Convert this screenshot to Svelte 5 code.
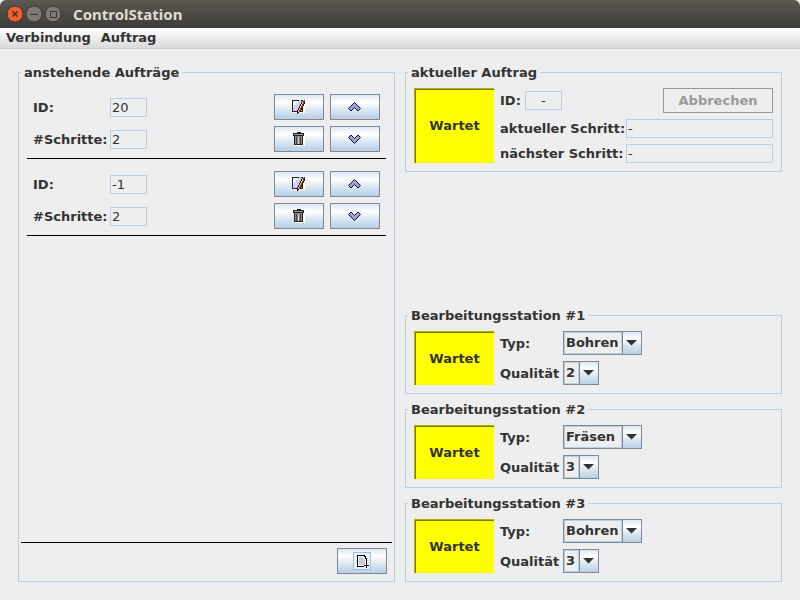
<script>
  const orders = $state([
    { id: '20', steps: '2' },
    { id: '-1', steps: '2' }
  ]);
  const stations = $state([
    { type: 'Bohren', quality: '2' },
    { type: 'Fräsen', quality: '3' },
    { type: 'Bohren', quality: '3' }
  ]);
  const types = ['Bohren', 'Fräsen'];
  const qualities = ['1', '2', '3'];
  const pencilSteps = [0, 1, 2, 3, 4];
</script>

{#snippet editIcon()}
  <svg width="16" height="16" viewBox="0 0 16 16" aria-hidden="true" shape-rendering="crispEdges">
    <path d="M2 13h10V7h2v7H2z" fill="#fff" />
    <path d="M1 1h11v12H1z" fill="#222" />
    <path d="M2 2h9v10H2z" fill="#cfcff4" />
    <path d="M2 2h5v2H5v2H3v2H2z" fill="#f4f4ff" />
    <path d="M8 1h2v1h1v1H8z" fill="#9adccb" />
    {#each pencilSteps as step}
      <g transform="translate({10 - step} {3 + step * 2})">
        <path d="M0 0h4v2H0z" fill="#111" />
        <path d="M1 0h1v2H1z" fill="#f2dc50" />
        <path d="M2 0h1v2H2z" fill="#c4242c" />
      </g>
    {/each}
    <path d="M11 1h3v2h-3z" fill="#6b3a30" />
    <path d="M12 1h1v1h-1z" fill="#e0a898" />
    <path d="M6 13h2v1H7v1H6z" fill="#111" />
  </svg>
{/snippet}

{#snippet trashIcon()}
  <svg width="16" height="16" viewBox="0 0 16 16" aria-hidden="true" shape-rendering="crispEdges">
    <path d="M4 5h10v10H4z" fill="#fff" />
    <path d="M6 1h4v1h3v3H2V2h4z" fill="#222" />
    <path d="M3 3h9v1H3z" fill="#9a9a9a" />
    <path d="M3 5h9v9H3z" fill="#222" />
    <path d="M4 5h7v8H4z" fill="#888" />
    <path d="M5 6h1v7H5zM9 6h1v7H9z" fill="#444" />
    <path d="M7 6h1v7H7z" fill="#ccc" />
  </svg>
{/snippet}

{#snippet chevron(down)}
  <svg width="16" height="16" viewBox="0 0 16 16" aria-hidden="true">
    <path
      d={down
        ? 'M1.500 6.500 4 4 7.500 7.500 11 4 13.500 6.500 7.500 12.500z'
        : 'M7.500 3.500 13.500 9.500 11 12 7.500 8.500 4 12 1.500 9.500z'}
      fill="#a0a0d8"
      stroke="#111133"
      stroke-width="1"
    />
  </svg>
{/snippet}

{#snippet combo(id, options, item, key, size)}
  <span class="combo {size}">
    <span class="face"></span>
    <span class="arrow">
      <svg width="11" height="6" viewBox="0 0 11 6" aria-hidden="true"><path d="M0 0h11L5.500 5.500z" fill="#333" /></svg>
    </span>
    <select {id} bind:value={item[key]}>
      {#each options as option}
        <option value={option}>{option}</option>
      {/each}
    </select>
  </span>
{/snippet}

<div class="window">
  <header class="titlebar">
    <button class="control" aria-label="Schließen">
      <svg width="18" height="18" viewBox="0 0 18 18"><circle cx="9" cy="9" r="8" fill="#ee5f32" stroke="#35342f" /><path d="M6.500 6.500l5 5m0-5l-5 5" stroke="#4a2418" stroke-width="1.300" /></svg>
    </button>
    <button class="control" aria-label="Minimieren">
      <svg width="18" height="18" viewBox="0 0 18 18"><circle cx="9" cy="9" r="8" fill="#7c7a72" stroke="#35342f" /><path d="M5 9.500h8" stroke="#35342f" /></svg>
    </button>
    <button class="control" aria-label="Maximieren">
      <svg width="18" height="18" viewBox="0 0 18 18"><circle cx="9" cy="9" r="8" fill="#7c7a72" stroke="#35342f" /><path d="M6.500 6.500h6v6h-6z" fill="none" stroke="#35342f" /></svg>
    </button>
    <h1>ControlStation</h1>
  </header>

  <nav class="menubar">
    <button>Verbindung</button>
    <button>Auftrag</button>
  </nav>

  <main>
    <fieldset class="pending">
      <legend>anstehende Aufträge</legend>
      <ul>
        {#each orders as order, i}
          <li>
            <label for="order-id-{i}">ID:</label>
            <input id="order-id-{i}" value={order.id} readonly />
            <button class="metal edit" aria-label="Bearbeiten">{@render editIcon()}</button>
            <button class="metal" aria-label="Nach oben">{@render chevron(false)}</button>
            <label for="order-steps-{i}">#Schritte:</label>
            <input id="order-steps-{i}" value={order.steps} readonly />
            <button class="metal edit" aria-label="Löschen">{@render trashIcon()}</button>
            <button class="metal" aria-label="Nach unten">{@render chevron(true)}</button>
          </li>
        {/each}
      </ul>
      <footer>
        <button class="metal" aria-label="Auftrag hinzufügen">
          <svg width="18" height="18" viewBox="0 0 18 18" aria-hidden="true" shape-rendering="crispEdges">
            <path d="M.5.5h17v17H.5z" fill="#e9f0f7" stroke="#a3bdd9" />
            <path d="M5 4h6l3 3v8H5z" fill="#fff" />
            <path d="M4 3h8v1h1v2h1v5h-1V7h-1V5h-1V4H5v10h6v1H4z" fill="#000" />
            <path d="M6 5h4v2h2v6H6z" fill="#c9c9e6" />
            <path d="M13 11h1v2h2v1h-2v2h-1v-2h-2v-1h2z" fill="#000" />
          </svg>
        </button>
      </footer>
    </fieldset>

    <div class="side">
      <fieldset>
        <legend>aktueller Auftrag</legend>
        <div class="current">
          <div class="status">Wartet</div>
          <div class="details">
            <div class="row head">
              <label for="current-id">ID:</label>
              <input id="current-id" value="-" readonly />
              <button class="cancel" disabled>Abbrechen</button>
            </div>
            <div class="row step">
              <label for="current-step">aktueller Schritt:</label>
              <input id="current-step" value="-" readonly />
            </div>
            <div class="row step">
              <label for="next-step">nächster Schritt:</label>
              <input id="next-step" value="-" readonly />
            </div>
          </div>
        </div>
      </fieldset>

      <div class="stations">
        {#each stations as station, i}
          <fieldset>
            <legend>Bearbeitungsstation #{i + 1}</legend>
            <div class="station">
              <div class="status">Wartet</div>
              <label for="type-{i}">Typ:</label>
              {@render combo(`type-${i}`, types, station, 'type', 'wide')}
              <label for="quality-{i}">Qualität</label>
              {@render combo(`quality-${i}`, qualities, station, 'quality', 'narrow')}
            </div>
          </fieldset>
        {/each}
      </div>
    </div>
  </main>
</div>

<style>
  :global(body) {
    margin: 0;
    background: #eee;
  }

  .window {
    display: flex;
    flex-direction: column;
    min-height: 100vh;
    background: #eee;
    color: #333;
    font: bold 13px/14px 'DejaVu Sans', sans-serif;
  }

  .window * {
    box-sizing: border-box;
  }

  button,
  input,
  select {
    margin: 0;
    padding: 0;
    border: 0;
    border-radius: 0;
    background: none;
    color: inherit;
    font: inherit;
  }

  svg {
    display: block;
  }

  .titlebar {
    display: flex;
    align-items: center;
    gap: 1px;
    height: 28px;
    padding: 0 6px;
    border-radius: 6px 6px 0 0;
    background: linear-gradient(#5b5850, #3d3c38);
  }

  h1 {
    margin: 0 0 0 10px;
    color: #dfdbd2;
    font: bold 15px/20px 'Noto Sans', sans-serif;
  }

  .menubar {
    display: flex;
    gap: 10px;
    height: 21px;
    padding: 0 6px;
    border-bottom: 1px solid #ccc;
    background: linear-gradient(#fff, #dadada);
  }

  main {
    flex: 1;
    display: grid;
    grid-template-columns: 1fr 1fr;
    gap: 10px;
    padding: 16px 18px 18px;
  }

  fieldset {
    min-width: 0;
    margin: 0;
    padding: 0 2px;
    border: 1px solid #b8cfe5;
  }

  legend {
    height: 14px;
    padding: 0 3px;
    line-height: 16px;
  }

  .pending {
    display: flex;
    flex-direction: column;
  }

  ul {
    flex: 1;
    margin: 0;
    padding: 3px 6px 0;
    list-style: none;
  }

  li {
    display: grid;
    grid-template-columns: 71px 37px 1fr 50px;
    gap: 6px;
    align-items: center;
    padding: 12px 6px 6px;
    border-bottom: 1px solid #000;
  }

  li label,
  .station label {
    padding-top: 2px;
  }

  input {
    width: 100%;
    min-width: 0;
    height: 19px;
    padding: 0 1px;
    border: 1px solid #b8cfe5;
    font-weight: normal;
  }

  .metal {
    display: flex;
    align-items: center;
    justify-content: center;
    width: 50px;
    height: 26px;
    border: 1px solid #7a8a99;
    background: linear-gradient(#dde8f3, #fff 30%, #dde8f3 60%, #b8cfe5);
  }

  .edit {
    justify-self: end;
  }

  footer {
    display: flex;
    justify-content: flex-end;
    padding: 5px 5px 7px;
    border-top: 1px solid #000;
  }

  .side {
    display: flex;
    flex-direction: column;
    justify-content: space-between;
  }

  .current {
    display: flex;
    gap: 6px;
    padding: 9px 6px 8px;
  }

  .status {
    display: flex;
    align-items: center;
    justify-content: center;
    width: 80px;
    border-top: 1px solid #b2b200;
    border-left: 1px solid #b2b200;
    background: #ff0;
    box-shadow: inset 1px 1px #7c7c00;
  }

  .details {
    flex: 1;
    display: flex;
    flex-direction: column;
    gap: 6px;
  }

  .row {
    display: flex;
    align-items: center;
  }

  .head {
    gap: 4px;
  }

  .head input {
    width: 37px;
    text-align: center;
  }

  .step label {
    flex: none;
    width: 126px;
    white-space: nowrap;
  }

  .cancel {
    width: 110px;
    height: 25px;
    margin-left: auto;
    border: 1px solid #999;
    color: #999;
  }

  .stations {
    display: flex;
    flex-direction: column;
    gap: 8px;
  }

  .station {
    display: grid;
    grid-template-columns: 80px 57px 1fr;
    gap: 6px;
    align-items: center;
    padding: 9px 6px 8px;
  }

  .station .status {
    grid-row: span 2;
    align-self: stretch;
  }

  .combo {
    display: grid;
    grid-template-columns: 1fr 19px;
    height: 24px;
    border: 1px solid #7a8a99;
  }

  .wide {
    width: 79px;
  }

  .narrow {
    width: 36px;
  }

  .face {
    grid-area: 1 / 1;
    border: 1px solid #b8cfe5;
  }

  .arrow {
    grid-area: 1 / 2;
    display: flex;
    align-items: center;
    justify-content: center;
    padding-right: 1px;
    border-left: 1px solid #7a8a99;
    background: linear-gradient(#dde8f3, #fff 30%, #dde8f3 60%, #b8cfe5);
  }

  select {
    grid-area: 1 / 1 / 2 / 3;
    width: 100%;
    min-width: 0;
    padding-left: 2px;
    appearance: none;
  }
</style>
